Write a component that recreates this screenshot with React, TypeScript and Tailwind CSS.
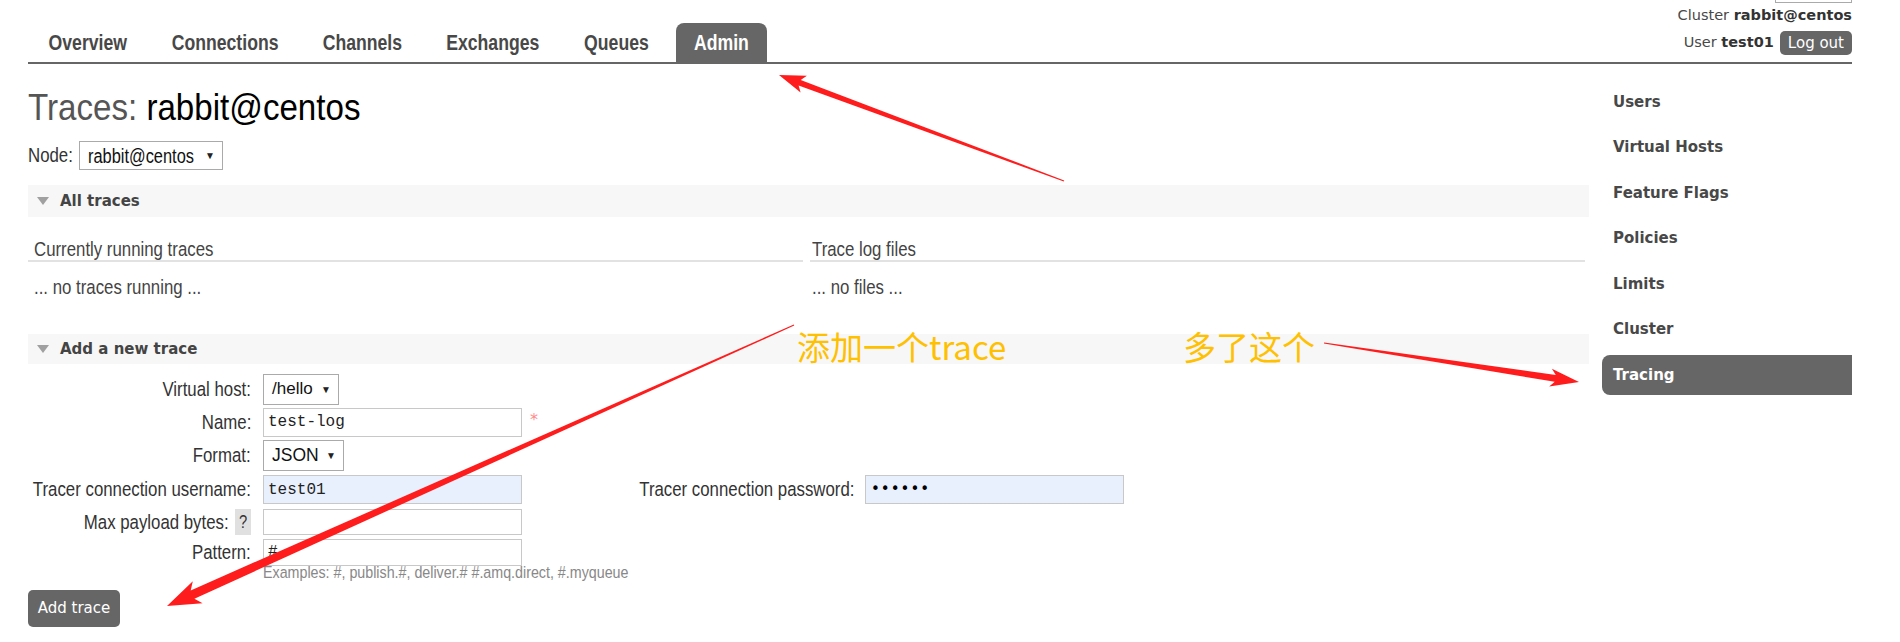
import React from 'react';

const ARIAL = "font-['Liberation_Sans',sans-serif]";
const VERDANA = "font-['DejaVu_Sans','Verdana',sans-serif]";

const TABS: [string, string][] = [
  ['Overview', 'w-[115px]'],
  ['Connections', 'w-[139px]'],
  ['Channels', 'w-[113px]'],
  ['Exchanges', 'w-[126px]'],
  ['Queues', 'w-[98px]'],
  ['Admin', 'w-[91px]'],
];
const SIDE = ['Users', 'Virtual Hosts', 'Feature Flags', 'Policies', 'Limits', 'Cluster', 'Tracing'];

// tapered red arrow as drawn by a screenshot tool
function arrow(tx: number, ty: number, px: number, py: number, sw: number, hl: number, hw: number) {
  const dx = px - tx;
  const dy = py - ty;
  const len = Math.hypot(dx, dy);
  const ux = dx / len;
  const uy = dy / len;
  const nx = -uy;
  const ny = ux;
  const bx = px - ux * hl;
  const by = py - uy * hl;
  const wx = bx - ux * hl * 0.2;
  const wy = by - uy * hl * 0.2;
  const pts = [
    [tx + nx * 0.6, ty + ny * 0.6],
    [bx + (nx * sw) / 2, by + (ny * sw) / 2],
    [wx + (nx * hw) / 2, wy + (ny * hw) / 2],
    [px, py],
    [wx - (nx * hw) / 2, wy - (ny * hw) / 2],
    [bx - (nx * sw) / 2, by - (ny * sw) / 2],
    [tx - nx * 0.6, ty - ny * 0.6],
  ];
  return pts.map((p) => p[0].toFixed(1) + ',' + p[1].toFixed(1)).join(' ');
}

// the page uses a condensed face; squeeze Arial metrics to match
function N({ children, o = 'origin-left' }: { children: React.ReactNode; o?: string }) {
  return <span className={`inline-block whitespace-nowrap scale-x-[0.82] ${o}`}>{children}</span>;
}

function Caret() {
  return <span className="block ml-[9px] w-0 h-0 border-x-[6px] border-x-transparent border-t-[8px] border-t-[#a0a0a0]" />;
}

function Select({ value, w, h, cls, textW = '' }: { value: React.ReactNode; w: string; h: string; cls: string; textW?: string }) {
  return (
    <div className={`${w} ${h} border border-[#aaa] bg-white flex items-center pl-[8px] pr-[7px] text-[#111] ${ARIAL} ${cls}`}>
      <span className={`${textW} whitespace-nowrap`}>{value}</span>
      <span className="ml-auto text-[10px] text-[#222]">▼</span>
    </div>
  );
}

function Input({ value, blue }: { value?: string; blue?: boolean }) {
  return (
    <div
      className={`w-[259px] h-full border border-[#c8c8c8] flex items-center px-[4px] font-['Liberation_Mono',monospace] text-[16px] text-[#222] ${
        blue ? 'bg-[#e8f0fe]' : 'bg-white'
      }`}
    >
      {value}
    </div>
  );
}

function Row({ h, label, children, extra }: { h: string; label: React.ReactNode; children: React.ReactNode; extra?: React.ReactNode }) {
  return (
    <div className={`flex items-center ${h}`}>
      <div className={`w-[235px] pr-[12px] flex justify-end items-center text-[20.5px] text-[#333] ${ARIAL}`}>{label}</div>
      <div className="w-[276px] h-full flex items-center">{children}</div>
      {extra}
    </div>
  );
}

function SectionBar({ title, h }: { title: string; h: string }) {
  return (
    <div className={`${h} bg-[#f7f7f7] flex items-center`}>
      <Caret />
      <span className="ml-[11px] text-[15px] font-bold text-[#444]">{title}</span>
    </div>
  );
}

export default function App() {
  return (
    <div className={`relative w-[1900px] h-[642px] overflow-hidden bg-white text-[#484848] ${VERDANA}`}>
      <div className="pl-[28px] pr-[48px]">
        {/* Header */}
        <header className="flex justify-between items-end h-[64px] border-b-2 border-[#666]">
          <nav className={`ml-[2px] flex items-end gap-[11px] ${ARIAL}`}>
            {TABS.map(([t, w]) => (
              <div
                key={t}
                className={`${w} h-[39px] pt-[2px] flex items-center justify-center text-[21.5px] font-bold ${
                  t === 'Admin' ? 'bg-[#666] text-white rounded-t-[8px]' : 'text-[#484848]'
                }`}
              >
                <N o="origin-center">{t}</N>
              </div>
            ))}
          </nav>
          <div className="flex flex-col items-end self-start">
            <div className="w-[77px] h-[3px] border-x border-b border-[#aaa]" />
            <div className="h-[26px] flex items-center text-[14.5px] text-[#484848]">
              Cluster&nbsp;<b className="text-[#333]">rabbit@centos</b>
            </div>
            <div className="h-[27px] pt-[1px] flex items-center text-[14.5px]">
              User&nbsp;<b className="text-[#333]">test01</b>
              <span className="ml-[6px] h-[24px] px-[8px] rounded-[5px] bg-[#666] text-white text-[15px] flex items-center">Log out</span>
            </div>
          </div>
        </header>

        <div className="flex gap-[13px]">
          {/* Main */}
          <main className="w-[1561px]">
            <h1 className={`mt-[24px] h-[40px] leading-[40px] text-[36px] text-[#555] ${ARIAL}`}>
              <span className="inline-block whitespace-nowrap origin-left scale-x-[0.92]">
                Traces: <span className="text-black">rabbit@centos</span>
              </span>
            </h1>
            <div className={`mt-[13px] h-[29px] flex items-center text-[20.5px] text-[#333] ${ARIAL}`}>
              <span className="w-[51px]">
                <N>Node:</N>
              </span>
              <Select value={<N>rabbit@centos</N>} w="w-[144px]" h="h-[29px]" cls="text-[20px]" textW="w-[112px]" />
            </div>

            <div className="mt-[15px]">
              <SectionBar title="All traces" h="h-[32px]" />
            </div>

            <div className={`grid grid-cols-2 gap-[7px] pr-[4px] text-[20.5px] text-[#444] ${ARIAL}`}>
              <div>
                <div className="mt-[21px] h-[22px] leading-[22px] pl-[6px] border-b-2 border-[#e2e2e2] box-content">
                  <N>Currently running traces</N>
                </div>
                <div className="mt-[14px] h-[22px] leading-[22px] pl-[6px]">
                  <N>... no traces running ...</N>
                </div>
              </div>
              <div>
                <div className="mt-[21px] h-[22px] leading-[22px] pl-[2px] border-b-2 border-[#e2e2e2] box-content">
                  <N>Trace log files</N>
                </div>
                <div className="mt-[14px] h-[22px] leading-[22px] pl-[2px]">
                  <N>... no files ...</N>
                </div>
              </div>
            </div>

            <div className="mt-[36px]">
              <SectionBar title="Add a new trace" h="h-[30px]" />
            </div>

            <div className="mt-[8px]">
              <Row h="h-[34px]" label={<N o="origin-right">Virtual host:</N>}>
                <Select value="/hello" w="w-[76px]" h="h-[31px]" cls="text-[17px]" />
              </Row>
              <Row h="h-[32px]" label={<N o="origin-right">Name:</N>}>
                <div className="h-[29px] flex">
                  <Input value="test-log" />
                </div>
                <span className="ml-[8px] self-start mt-[2px] text-[#ff8c8c] text-[16px]">*</span>
              </Row>
              <Row h="h-[35px]" label={<N o="origin-right">Format:</N>}>
                <Select value="JSON" w="w-[81px]" h="h-[31px]" cls="text-[17.5px]" />
              </Row>
              <Row
                h="h-[33px]"
                label={<N o="origin-right">Tracer connection username:</N>}
                extra={
                  <div className="flex items-center h-full">
                    <div className={`w-[326px] pr-[11px] flex justify-end text-[20.5px] text-[#333] ${ARIAL}`}>
                      <N o="origin-right">Tracer connection password:</N>
                    </div>
                    <div className="h-[29px] flex">
                      <div className="w-[259px] h-full border border-[#c8c8c8] bg-[#e8f0fe] flex items-center px-[5px] text-[15px] tracking-[1px] text-black">
                        ••••••
                      </div>
                    </div>
                  </div>
                }
              >
                <div className="h-[29px] flex">
                  <Input value="test01" blue />
                </div>
              </Row>
              <Row
                h="h-[32px]"
                label={
                  <>
                    <N o="origin-right">Max payload bytes:</N>
                    <span className="ml-[6px] w-[16px] h-[26px] bg-[#e0e0e0] flex items-center justify-center text-[18px]">
                      <N o="origin-center">?</N>
                    </span>
                  </>
                }
              >
                <div className="h-[26px] flex">
                  <Input />
                </div>
              </Row>
              <Row h="h-[28px]" label={<N o="origin-right">Pattern:</N>}>
                <div className="h-[27px] flex">
                  <Input value="#" />
                </div>
              </Row>
              <div className={`h-[13px] pl-[235px] text-[17.4px] leading-[13px] text-[#888] ${ARIAL}`}>
                <N>Examples: #, publish.#, deliver.# #.amq.direct, #.myqueue</N>
              </div>
            </div>

            <div className="mt-[11px] w-[92px] h-[37px] rounded-[5px] bg-[#666] text-white text-[15px] flex items-center justify-center">
              Add trace
            </div>
          </main>

          {/* Sidebar */}
          <aside className="w-[250px] pt-[18px] flex flex-col gap-[5.5px]">
            {SIDE.map((s) => (
              <div
                key={s}
                className={`h-[40px] pl-[11px] flex items-center text-[15px] font-bold ${
                  s === 'Tracing' ? 'bg-[#666] text-white rounded-l-[8px]' : 'text-[#484848]'
                }`}
              >
                {s}
              </div>
            ))}
          </aside>
        </div>
      </div>

      {/* Annotations */}
      <svg className="absolute inset-0 pointer-events-none" width="1900" height="642">
        <polygon points={arrow(1064, 181, 779, 75, 6, 22, 18)} fill="#ff1c1c" />
        <polygon points={arrow(794, 325, 167, 606, 9, 28, 24)} fill="#ff1c1c" />
        <polygon points={arrow(1324, 343, 1579, 382, 7, 24, 18)} fill="#ff1c1c" />
      </svg>
      <span className="absolute left-[797px] top-[326px] text-[33px] leading-[40px] text-[#ffc000] font-['Noto_Sans_CJK_SC',sans-serif] whitespace-nowrap">
        添加一个trace
      </span>
      <span className="absolute left-[1183px] top-[326px] text-[33px] leading-[40px] text-[#ffc000] font-['Noto_Sans_CJK_SC',sans-serif] whitespace-nowrap">
        多了这个
      </span>
    </div>
  );
}
